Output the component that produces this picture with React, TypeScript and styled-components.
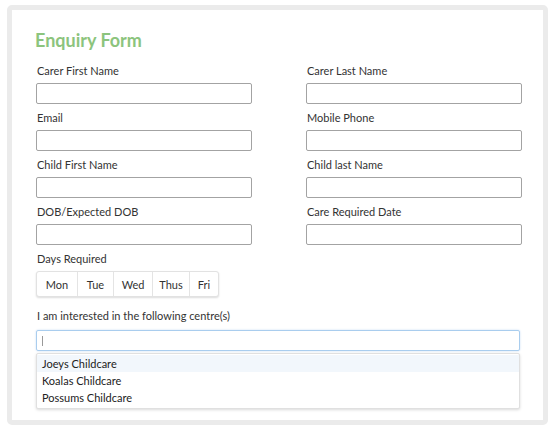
import React from 'react';
import styled, { createGlobalStyle } from 'styled-components';

const GlobalStyle = createGlobalStyle`
  body {
    margin: 0;
    background: #ffffff;
    font-family: Lato, "Liberation Sans", sans-serif;
  }
`;

const Panel = styled.div`
  box-sizing: border-box;
  width: 541px;
  height: 420px;
  margin: 5px 0 0 7px;
  border: 5px solid #ebebeb;
  border-radius: 5px;
  padding: 19px 21px 0 24px;
`;

const Title = styled.h1`
  margin: 0 0 0 -1px;
  font-size: 18px;
  line-height: 22px;
  font-weight: 700;
  color: #8cc47d;
`;

const Grid = styled.div`
  display: grid;
  grid-template-columns: 216px 216px;
  column-gap: 54px;
  row-gap: 7px;
  margin-top: 13px;
`;

const Field = styled.div`
  display: flex;
  flex-direction: column;
`;

const Label = styled.label<{ $gap?: number }>`
  font-size: 11px;
  line-height: 14px;
  color: #333333;
  padding-left: 1px;
  margin-bottom: ${(p) => p.$gap ?? 5}px;
`;

const TextInput = styled.input`
  box-sizing: border-box;
  width: 216px;
  height: 21px;
  margin: 0;
  border: 1px solid #a3a3a3;
  border-radius: 2px;
  background: #fff;
  outline: none;
`;

const Section = styled.div<{ $top: number }>`
  display: flex;
  flex-direction: column;
  margin-top: ${(p) => p.$top}px;
`;

const DayGroup = styled.div`
  display: flex;
  align-self: flex-start;
  border: 1px solid #e2e2e2;
  border-radius: 3px;
  box-shadow: 0 1px 2px rgba(0, 0, 0, 0.14);
  background: #fff;
`;

const DayButton = styled.div<{ $w: number }>`
  box-sizing: border-box;
  width: ${(p) => p.$w}px;
  height: 24px;
  display: flex;
  align-items: center;
  justify-content: center;
  font-size: 11px;
  color: #333;
  & + & {
    border-left: 1px solid #e4e4e4;
  }
`;

const FocusBox = styled.div`
  box-sizing: border-box;
  width: 484px;
  height: 21px;
  border: 1px solid #a9cdee;
  border-radius: 2px;
  box-shadow: 0 0 2px rgba(120, 170, 230, 0.45);
  display: flex;
  align-items: center;
  padding-left: 5px;
`;

const Caret = styled.span`
  width: 1px;
  height: 10px;
  background: #999;
`;

const Dropdown = styled.ul`
  box-sizing: border-box;
  width: 484px;
  margin: 2px 0 0;
  padding: 1px 0 2px;
  list-style: none;
  border: 1px solid #e0e0e0;
  border-radius: 2px;
  box-shadow: 0 1px 3px rgba(0, 0, 0, 0.15);
  background: #fff;
`;

const Option = styled.li<{ $active?: boolean }>`
  font-size: 11px;
  line-height: 17px;
  padding-left: 5px;
  color: #222;
  background: ${(p) => (p.$active ? '#f2f7fc' : 'transparent')};
`;

const fields = [
  'Carer First Name',
  'Carer Last Name',
  'Email',
  'Mobile Phone',
  'Child First Name',
  'Child last Name',
  'DOB/Expected DOB',
  'Care Required Date',
];

const days: [string, number][] = [
  ['Mon', 40],
  ['Tue', 36],
  ['Wed', 39],
  ['Thus', 37],
  ['Fri', 29],
];

const centres = ['Joeys Childcare', 'Koalas Childcare', 'Possums Childcare'];

export default function App() {
  return (
    <>
      <GlobalStyle />
      <Panel>
        <Title>Enquiry Form</Title>
        <Grid>
          {fields.map((f) => (
            <Field key={f}>
              <Label>{f}</Label>
              <TextInput type="text" />
            </Field>
          ))}
        </Grid>
        <Section $top={7}>
          <Label $gap={5}>Days Required</Label>
          <DayGroup>
            {days.map(([d, w]) => (
              <DayButton key={d} $w={w}>{d}</DayButton>
            ))}
          </DayGroup>
        </Section>
        <Section $top={12}>
          <Label $gap={7}>I am interested in the following centre(s)</Label>
          <FocusBox>
            <Caret />
          </FocusBox>
          <Dropdown>
            {centres.map((c, i) => (
              <Option key={c} $active={i === 0}>{c}</Option>
            ))}
          </Dropdown>
        </Section>
      </Panel>
    </>
  );
}
